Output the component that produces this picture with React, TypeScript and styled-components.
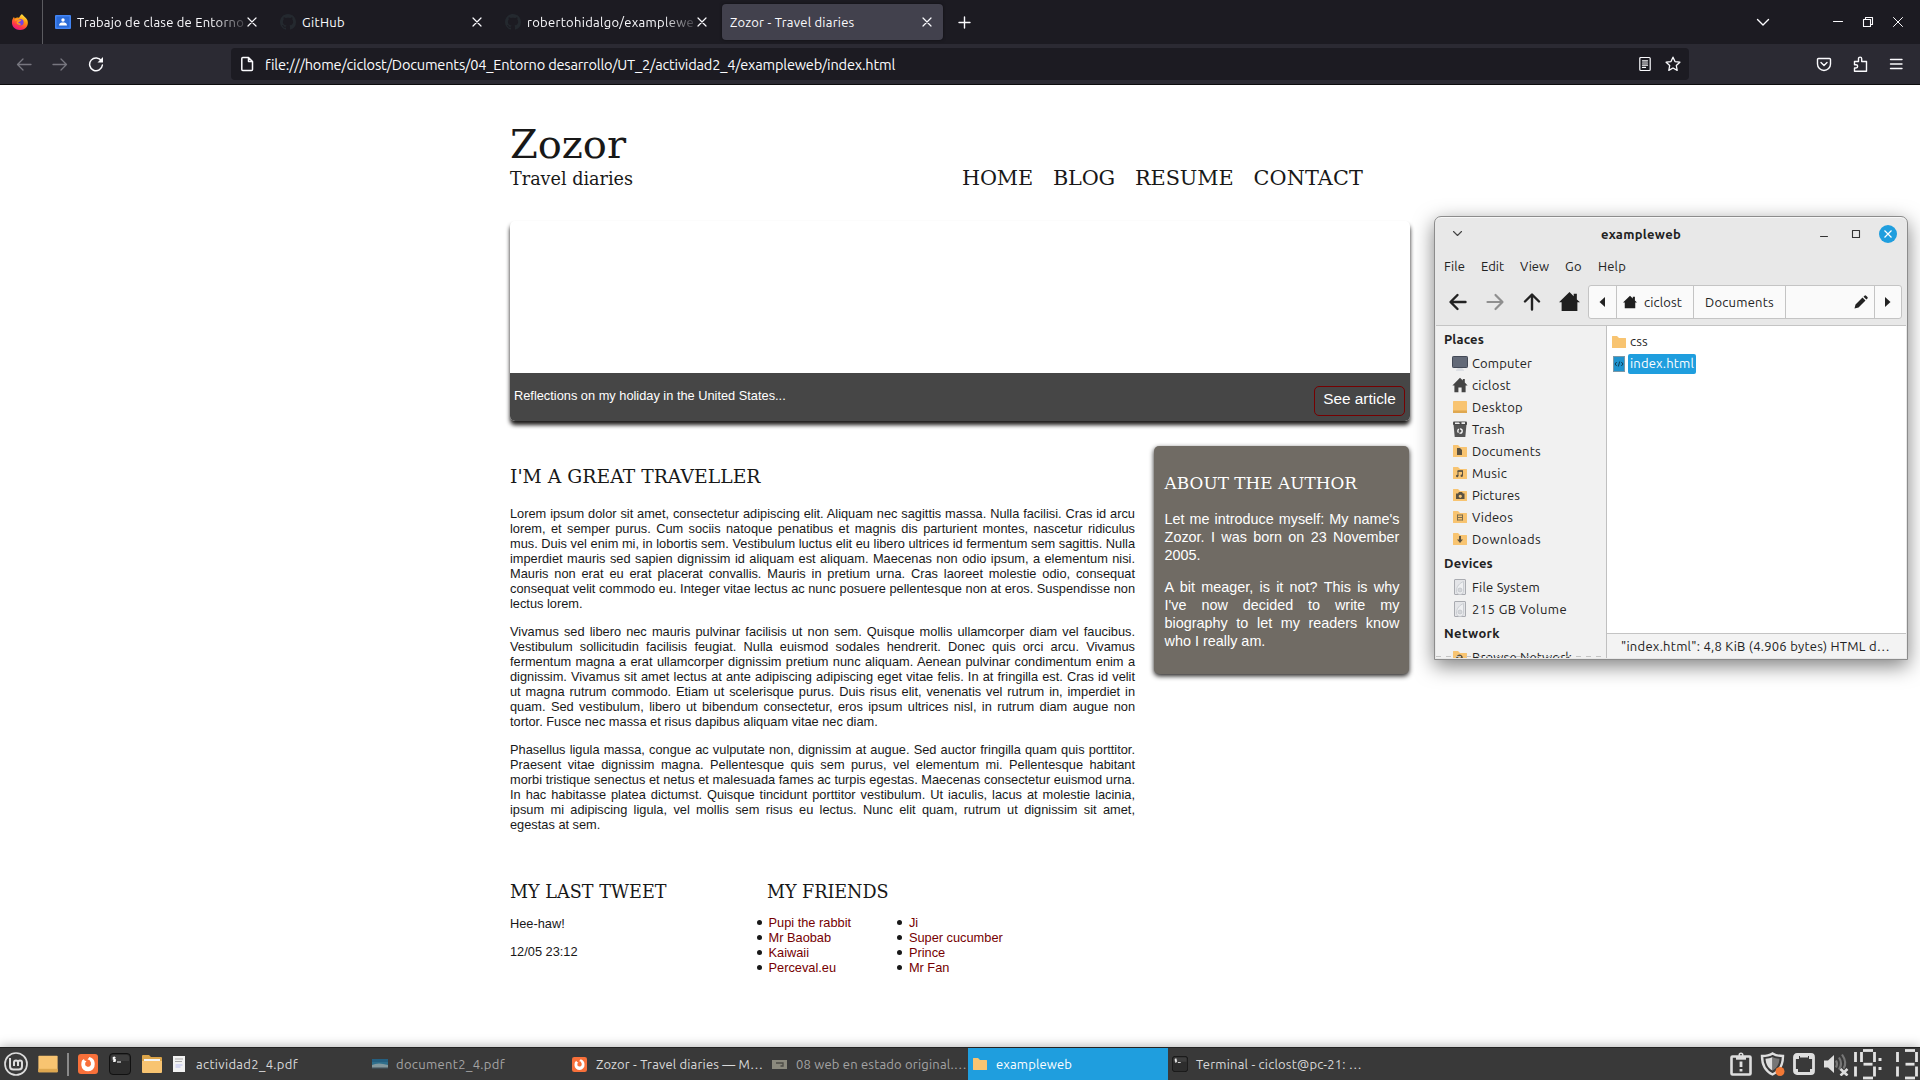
import React, { useLayoutEffect, useRef, useState } from 'react';
import styled, { createGlobalStyle, css } from 'styled-components';

const UI = `"Ubuntu", "Noto Sans", "Open Sans", sans-serif`;
const SANS = `"Liberation Sans", Arial, sans-serif`;
const SERIF = `"DejaVu Serif", serif`;

const GlobalStyle = createGlobalStyle`
  * { box-sizing: border-box; }
  body { margin: 0; background: #fff; overflow: hidden; }
  h1, h2, p, ul { margin: 0; padding: 0; font-weight: normal; }
  ul { list-style: none; }
  svg { display: block; flex: none; }
`;

/* A single-line label whose tracking is computed so that it spans `w` pixels. */
const LabelSpan = styled.span`
  display: inline-block;
  white-space: pre;
  flex: none;
`;

function Label({ w, children }: { w: number; children: string }) {
  const ref = useRef<HTMLSpanElement>(null);
  const [spacing, setSpacing] = useState(0);
  useLayoutEffect(() => {
    if (ref.current) {
      setSpacing((w - ref.current.getBoundingClientRect().width) / children.length);
    }
  }, []);
  return <LabelSpan ref={ref} style={{ letterSpacing: `${spacing}px` }}>{children}</LabelSpan>;
}

const Screen = styled.div`
  position: relative;
  display: grid;
  grid-template-rows: 85px 1fr 33px;
  width: 1920px;
  height: 1080px;
  overflow: hidden;
  background: #fff;
  color: #181818;
`;

/* ---------- Browser chrome ---------- */
const Chrome = styled.header`
  display: flex;
  flex-direction: column;
  background: #2b2a33;
  border-bottom: 1px solid #0c0c0d;
  color: #fbfbfe;
  font-family: ${UI};
`;
const TabStrip = styled.div`
  display: flex;
  align-items: center;
  height: 44px;
  background: #1c1b22;
`;
const PinnedTab = styled.div`
  display: flex;
  align-items: center;
  justify-content: center;
  width: 43px;
  height: 44px;
  padding-right: 3px;
  border-right: 1px solid #5b5b60;
  margin-right: 4px;
`;
const Tab = styled.div<{ $active?: boolean }>`
  display: flex;
  align-items: center;
  width: 221px;
  height: 36px;
  margin-right: 4px;
  padding: 0 10px 0 8px;
  border-radius: 4px;
  font-size: 13px;
  ${(p) => p.$active && css`background: #42414d; box-shadow: 0 0 3px rgba(0, 0, 0, 0.5);`}
`;
const TabIcon = styled.div`
  width: 22px;
`;
const TabTitle = styled.div<{ $fade?: boolean }>`
  flex: 1;
  min-width: 0;
  overflow: hidden;
  line-height: 20px;
  ${(p) => p.$fade && css`mask-image: linear-gradient(to left, rgba(0, 0, 0, 0.15) 0, #000 32px);`}
`;
const TabClose = styled.div`
  width: 12px;
  margin-left: 1px;
`;
const Spacer = styled.div`
  flex: 1;
`;
const WindowButtons = styled.div`
  display: flex;
  align-items: center;
  padding-right: 14px;
  gap: 14px;
`;
const ChevronSlot = styled.div`
  margin-right: 59px;
`;
const NavRow = styled.div`
  display: flex;
  align-items: center;
  height: 40px;
`;
const NavButtons = styled.div`
  display: flex;
  gap: 20px;
  width: 231px;
  padding-left: 16px;
`;
const UrlBar = styled.div`
  display: flex;
  align-items: center;
  width: 1458px;
  height: 32px;
  padding: 0 8px;
  border-radius: 4px;
  background: #1c1b22;
  font-size: 14.6px;
  line-height: 22px;
`;
const UrlText = styled.div`
  flex: 1;
  padding: 2px 0 0 10px;
`;
const UrlActions = styled.div`
  display: flex;
  gap: 12px;
`;
const NavActions = styled.div`
  display: flex;
  flex: 1;
  justify-content: flex-end;
  gap: 20px;
  padding-right: 16px;
`;

/* ---------- Travel diaries page ---------- */
const Page = styled.main`
  width: 900px;
  margin: 0 0 0 510px;
  padding-top: 36px;
  font-family: ${SANS};
`;
const PageHeader = styled.div`
  display: flex;
  align-items: flex-end;
  height: 69px;
`;
const Brand = styled.div`
  width: 452px;
  font-family: ${SERIF};
`;
const SiteTitle = styled.h1`
  font-size: 40px;
  line-height: 47px;
`;
const SiteTagline = styled.h2`
  font-size: 17.6px;
  line-height: 22px;
`;
const Menu = styled.nav`
  display: flex;
  gap: 20px;
  font-family: ${SERIF};
  font-size: 20.8px;
  line-height: 24px;
`;
const Banner = styled.div`
  display: flex;
  flex-direction: column;
  justify-content: flex-end;
  height: 200px;
  margin-top: 31px;
  border-radius: 5px;
  background: #fff;
  box-shadow: 0 4px 4px #1c1a19;
`;
const BannerStrip = styled.div`
  display: flex;
  justify-content: space-between;
  height: 48px;
  padding: 13px 5px 0 4px;
  border-radius: 0 0 5px 5px;
  background: #464646;
  color: #fff;
  font-size: 12.8px;
  line-height: 19px;
`;
const BannerText = styled.div`
  font-size: 12.8px;
`;
const ArticleButton = styled.div`
  display: flex;
  justify-content: center;
  width: 91px;
  height: 30px;
  padding-top: 2px;
  border: 1px solid #760001;
  border-radius: 5px;
  font-size: 15.36px;
`;
const Columns = styled.div`
  display: flex;
  align-items: flex-start;
  justify-content: space-between;
  height: 386px;
  margin-top: 25px;
`;
const Article = styled.article`
  width: 625px;
  padding-top: 19px;
  font-size: 12.8px;
  line-height: 15px;
  text-align: justify;
  p { margin-bottom: 13px; }
`;
const Heading = styled.h1<{ $size: number }>`
  font-family: ${SERIF};
  font-size: ${(p) => p.$size}px;
  line-height: 24px;
`;
const ArticleHeading = styled(Heading)`
  height: 24px;
  margin-bottom: 17px;
`;
const Aside = styled.aside`
  width: 255px;
  height: 228px;
  margin-right: 1px;
  padding: 27px 9.6px 0 10.6px;
  border-radius: 5px;
  background: #706b64;
  box-shadow: 0 2px 5px #1c1a19;
  color: #fff;
  font-size: 14.4px;
  line-height: 18px;
  text-align: justify;
  p { margin-bottom: 14px; }
`;
const AsideHeading = styled.h1`
  margin-bottom: 17px;
  font-family: ${SERIF};
  font-size: 16.85px;
  line-height: 20px;
`;
const Footer = styled.footer`
  display: flex;
  padding-top: 48px;
  font-size: 12.8px;
  line-height: 15px;
`;
const Tweet = styled.section`
  width: 257px;
  p { margin: 12px 0 13px; }
  p + p { margin-top: 13px; }
`;
const Friends = styled.section``;
const FriendLists = styled.div`
  display: flex;
  margin: 11px 0 0 -10px;
`;
const FriendList = styled.ul`
  width: 140.400px;
  color: #760001;
  li { display: flex; align-items: center; gap: 6.500px; }
  li::before {
    content: '';
    width: 5px;
    height: 5px;
    border-radius: 50%;
    background: #181818;
  }
`;

/* ---------- File manager window ---------- */
const Window = styled.section`
  position: absolute;
  left: 1434px;
  top: 216px;
  display: flex;
  flex-direction: column;
  width: 474px;
  height: 444px;
  border: 1px solid #8c8c8c;
  border-radius: 7px 7px 0 0;
  background: #e8e8e8;
  box-shadow: 0 6px 20px rgba(0, 0, 0, 0.5), inset 0 1px 0 #f8f8f8;
  color: #222;
  font-family: ${UI};
  font-size: 13px;
`;
const TitleBar = styled.div`
  display: grid;
  grid-template-columns: 150px auto 1fr;
  align-items: center;
  height: 34px;
  padding: 0 10px 0 16px;
  font-weight: 700;
`;
const TitleButtons = styled.div`
  display: flex;
  align-items: center;
  justify-content: flex-end;
  gap: 14px;
`;
const MenuBar = styled.div`
  display: flex;
  align-items: center;
  gap: 16px;
  height: 30px;
  padding-left: 9px;
`;
const ToolBar = styled.div`
  display: flex;
  align-items: center;
  height: 44px;
  padding: 0 0 3px 13px;
  gap: 17px;
`;
const PathBar = styled.div`
  display: flex;
  width: 314px;
  height: 34px;
  margin-left: -9px;
  border: 1px solid #c4c4c4;
  border-radius: 3px;
  background: #fafafa;
`;
const PathCell = styled.div<{ $w: number; $end?: boolean; $pad?: number }>`
  display: flex;
  align-items: center;
  justify-content: ${(p) => (p.$end ? 'flex-end' : 'center')};
  gap: 7px;
  width: ${(p) => p.$w}px;
  padding-right: ${(p) => p.$pad ?? 0}px;
  border-right: 1px solid #c4c4c4;
  &:last-child { border-right: 0; }
`;
const WindowBody = styled.div`
  display: flex;
  flex: 1;
  min-height: 0;
  margin: 0 1px 1px;
  border-top: 1px solid #c4c4c4;
`;
const SideBar = styled.div`
  position: relative;
  width: 171px;
  overflow: hidden;
  border-right: 1px solid #c0c0c0;
  background: #f1f1f1;
`;
const SideScrollEdge = styled.div`
  position: absolute;
  left: 0;
  right: 5px;
  bottom: 1px;
  height: 1px;
  background: repeating-linear-gradient(to right, #c4c4c4 0 5px, transparent 5px 10px);
`;
const SideHeading = styled.div`
  height: 26px;
  padding-left: 8px;
  font-weight: 700;
  line-height: 26px;
`;
const SideItem = styled.div`
  display: flex;
  align-items: center;
  gap: 4px;
  height: 22px;
  padding-left: 16px;
  line-height: 22px;
`;
const FilePane = styled.div`
  display: flex;
  flex-direction: column;
  flex: 1;
  background: #fff;
`;
const FileList = styled.div`
  flex: 1;
  padding: 5px 0 0 4px;
`;
const FileRow = styled.div`
  display: flex;
  align-items: center;
  height: 22px;
  gap: 1px;
`;
const FileName = styled.div<{ $selected?: boolean }>`
  height: 20px;
  padding: 0 2px;
  border-radius: 2px;
  line-height: 19px;
  ${(p) => p.$selected && css`background: #1f9ede; color: #fff;`}
`;
const StatusBar = styled.div`
  height: 25px;
  padding-left: 14px;
  border-top: 1px solid #c4c4c4;
  background: #f3f3f3;
  line-height: 25px;
`;

/* ---------- Desktop panel ---------- */
const Panel = styled.footer`
  position: relative;
  display: flex;
  align-items: center;
  border-top: 1px solid #222;
  background: #393939;
  box-shadow: 0 0 12px rgba(0, 0, 0, 0.35);
  color: #dadada;
  font-family: ${UI};
  font-size: 13px;
`;
const Launchers = styled.div`
  display: flex;
  align-items: center;
  width: 168px;
  padding-left: 4px;
  gap: 9px;
`;
const AppLaunchers = styled.div`
  display: flex;
  align-items: center;
  gap: 11px;
`;
const LaunchDivider = styled.div`
  width: 2px;
  height: 23px;
  margin-left: -1px;
  background: #8a8a8a;
`;
const Task = styled.div<{ $state?: 'active' | 'minimized' }>`
  display: flex;
  align-items: center;
  width: 200px;
  height: 32px;
  padding-left: 4px;
  line-height: 22px;
  ${(p) => p.$state === 'active' && css`background: #1f9ede; color: #fff;`}
  ${(p) => p.$state === 'minimized' && css`color: #a4a4a4;`}
`;
const TaskIcon = styled.div<{ $inset?: number }>`
  width: 24px;
  padding-left: ${(p) => p.$inset ?? 0}px;
`;
const Tray = styled.div`
  display: flex;
  align-items: center;
  gap: 4px;
  margin-left: auto;
  padding-right: 1px;
`;
const TrayIcons = styled.div`
  display: flex;
  align-items: center;
  gap: 8px;
`;

/* ---------- Icons ---------- */
const Close = ({ s = 12, c = '#fbfbfe', w = 1.2 }: { s?: number; c?: string; w?: number }) => (
  <svg width={s} height={s} viewBox="0 0 12 12" stroke={c} strokeWidth={w} strokeLinecap="round">
    <path d="M2 2l8 8M10 2l-8 8" />
  </svg>
);
const Firefox = () => (
  <svg width="18" height="18" viewBox="0 0 18 18">
    <defs>
      <linearGradient id="fx" x1="0.8" y1="0" x2="0.3" y2="1">
        <stop offset="0" stopColor="#fff44f" />
        <stop offset="0.4" stopColor="#ff980e" />
        <stop offset="0.75" stopColor="#ff3647" />
        <stop offset="1" stopColor="#e31587" />
      </linearGradient>
    </defs>
    <path d="M11 1c1 2 4 3 5.500 6.500C18 12 15 17 9 17S.5 12.500 1 8.500C1.200 6.500 2 5 3 4l.7 1.500C5 4.500 6.500 4.500 7.500 4.700 8.500 5 8.500 3 11 1z" fill="url(#fx)" />
    <circle cx="9.300" cy="9.300" r="3.300" fill="#7542e5" />
    <path d="M4 7c2-1 3.500 0 5 .5-1 1-2.500.7-2.500 2 0 1 1 2 3 1.500" fill="none" stroke="#ff9a1f" strokeWidth="1.600" />
  </svg>
);
const Classroom = () => (
  <svg width="16" height="14" viewBox="0 0 16 14">
    <rect width="16" height="14" rx="1" fill="#4285f4" />
    <rect x="1.500" y="1.500" width="13" height="11" fill="#2a6bd8" />
    <circle cx="8" cy="5" r="1.700" fill="#fff" />
    <path d="M4 10.500c0-2.500 2-3 4-3s4 .5 4 3z" fill="#fff" />
  </svg>
);
const GitHub = () => (
  <svg width="16" height="16" viewBox="0 0 16 16" fill="#24292f">
    <path d="M8 0C3.580 0 0 3.580 0 8c0 3.540 2.290 6.530 5.470 7.590.4.070.55-.17.55-.38 0-.19-.01-.82-.01-1.490-2.010.37-2.530-.49-2.690-.94-.09-.23-.48-.94-.82-1.130-.28-.15-.68-.52-.01-.53.63-.01 1.080.58 1.230.82.72 1.210 1.870.87 2.330.66.07-.52.28-.87.51-1.070-1.780-.2-3.640-.89-3.640-3.950 0-.87.31-1.590.82-2.150-.08-.2-.36-1.020.08-2.120 0 0 .67-.21 2.200.82.64-.18 1.320-.27 2-.27s1.360.09 2 .27c1.530-1.040 2.200-.82 2.200-.82.44 1.100.16 1.920.08 2.120.51.56.82 1.270.82 2.150 0 3.070-1.870 3.750-3.650 3.950.29.25.54.73.54 1.480 0 1.070-.01 1.930-.01 2.200 0 .21.15.46.55.38A8 8 0 0 0 16 8c0-4.420-3.580-8-8-8z" />
  </svg>
);
const Line = ({ d, s = 16, c = '#fbfbfe', w = 1.4, fill = 'none' }: { d: string; s?: number; c?: string; w?: number; fill?: string }) => (
  <svg width={s} height={s} viewBox={`0 0 ${s} ${s}`} fill={fill} stroke={c} strokeWidth={w} strokeLinecap="round" strokeLinejoin="round">
    <path d={d} />
  </svg>
);
const Reload = () => (
  <svg width="16" height="16" viewBox="0 0 16 16" fill="none" stroke="#fbfbfe" strokeWidth="1.500">
    <path d="M13.500 5A6.400 6.400 0 1 0 14.400 9" strokeLinecap="round" />
    <path d="M15 1v5.500H9.500z" fill="#fbfbfe" stroke="none" />
  </svg>
);
const HomeGlyph = ({ s, c = '#1f1f1f', door }: { s: number; c?: string; door?: boolean }) => (
  <svg width={s} height={s} viewBox="0 0 20 20" fill={c}>
    {door
      ? <path d="M10 1L0.500 10.500H3V19H8V13h4v6h5v-8.500h2.500L16 7V2.500h-2.500V4.500z" />
      : <path d="M10 1L0 10.800H2.500V19h15v-8.200H20L17 8V2.500h-3V5z" />}
  </svg>
);

type Badge = 'doc' | 'music' | 'camera' | 'video' | 'down' | 'net';
const badgePaths: Record<Badge, React.ReactNode> = {
  doc: <path d="M5 5h3l2 2v5H5z" />,
  music: (
    <>
      <path d="M6 11V6h4.500v4.500" fill="none" stroke="#5b5241" strokeWidth="1" />
      <path d="M5.500 5.300h5.500v1.500H5.500z" />
      <circle cx="5.200" cy="11" r="1.200" />
      <circle cx="9.700" cy="10.700" r="1.200" />
    </>
  ),
  camera: <path fillRule="evenodd" d="M4 6.500h2L7 5h3l1 1.500h1.500V12H4zM8.300 7.700a1.600 1.600 0 1 0 .01 0z" />,
  video: <path d="M5.500 5.500v6M10.500 5.500v6M5.500 6h5M5.500 8.500h5M5.500 11h5" fill="none" stroke="#7d6c4c" strokeWidth="1" />,
  down: <path d="M7 5h2v3.500h2L8 12 5 8.500h2z" />,
  net: <path fillRule="evenodd" d="M7.500 5.500a3.300 3.300 0 1 0 .01 0zM7.500 7.500a1.300 1.300 0 1 1-.01 0z" />,
};
const Folder = ({ badge }: { badge?: Badge }) => (
  <svg width="16" height="16" viewBox="0 0 16 16">
    <path d="M1 2.500Q1 2 1.500 2H6l2 2h6.500q.5 0 .5.500V13.500q0 .5-.5.500h-13Q1 14 1 13.500z" fill="#f8c471" />
    {badge && <g fill="#5b5241">{badgePaths[badge]}</g>}
  </svg>
);
const Monitor = () => (
  <svg width="16" height="16" viewBox="0 0 16 16">
    <path d="M6 12h4l1 2.500h1V16H4v-1.500h1z" fill="#dcdfe4" />
    <rect x="0.500" y="1.500" width="15" height="11" rx="0.800" fill="#636a78" stroke="#434956" />
  </svg>
);
const DesktopIcon = ({ s = 16 }: { s?: number }) => (
  <svg width={s} height={s} viewBox="0 0 16 16">
    <rect x="1" y="2" width="14" height="12" rx="0.500" fill="#f8c471" />
    <rect x="1" y="11.500" width="14" height="2.500" fill="#dfa850" />
  </svg>
);
const Trash = () => (
  <svg width="16" height="16" viewBox="0 0 16 16">
    <path d="M1.500 3h13l-1.200 13H2.700z" fill="#555" />
    <rect x="1" y="0.500" width="14" height="3.500" rx="1" fill="#4a4a4a" />
    <path d="M3 1.500h4l1 1.500H3zM9.500 1.200H13V3H9.500z" fill="#eee" />
    <circle cx="8" cy="10" r="2.200" fill="none" stroke="#fff" strokeWidth="1.300" strokeDasharray="3.600 1" />
  </svg>
);
const Disk = () => (
  <svg width="16" height="16" viewBox="0 0 16 16">
    <rect x="2.500" y="0.500" width="11" height="15" rx="0.500" fill="#e4e5e8" stroke="#a9abb0" />
    <path d="M11.500 2.500v9.500a3.300 3.300 0 0 1-7 0C4.500 7 8 4 11.500 2.500z" fill="#eeeff1" stroke="#c3c6cc" strokeWidth=".8" />
    <circle cx="8" cy="11" r="2" fill="#d5d7db" stroke="#bbbec4" strokeWidth=".7" />
  </svg>
);
const HtmlFile = () => (
  <svg width="16" height="16" viewBox="0 0 16 16">
    <rect x="2.500" y="0.500" width="11" height="15" fill="#1f93ce" stroke="#7a98a8" />
    <path d="M5.700 6L4 8l1.700 2M10.300 6L12 8l-1.700 2M8.700 5.500l-1.400 5" fill="none" stroke="#123d54" strokeWidth="1" />
  </svg>
);
const MintLogo = () => (
  <svg width="24" height="24" viewBox="0 0 24 24" fill="none" stroke="#dcdcdc">
    <circle cx="12" cy="12" r="11" strokeWidth="1.700" />
    <path d="M6 6v8.200q0 3.300 3.300 3.300h5.400q3.300 0 3.300-3.300V10.500a2 2 0 0 0-4 0V14M14 10.500a2 2 0 0 0-4 0V14" strokeWidth="2" />
  </svg>
);
const FirefoxTile = ({ s }: { s: number }) => (
  <svg width={s} height={s} viewBox="0 0 20 20">
    <rect width="20" height="20" rx="3" fill="#f8703a" />
    <path d="M4 6.500L6 5l.5 1.500 2 .8-1.300 1.500v2.500l2 1.500h2l1.700-1.800V8.500L11.500 6 9.500 5.500 11.500 3c3.300.8 5.500 3.500 5.200 7.300A6.700 6.700 0 0 1 3.300 11c0-1.800.2-3.200.7-4.500z" fill="#fff" />
  </svg>
);
const TerminalTile = ({ s }: { s: number }) => (
  <svg width={s} height={s} viewBox="0 0 22 22">
    <rect x="0.500" y="0.500" width="21" height="21" rx="3.500" fill="#2d2d2d" stroke="#111" />
    <path d="M2 4q0-2 2-2h14q2 0 2 2v4H2z" fill="#3e3e3e" />
    <path d="M6.500 4.500H4.300v1.700h2v1.900H4M5.200 3.500v5.500M8 9h4" fill="none" stroke="#fff" strokeWidth="1.100" />
  </svg>
);
const FilesTile = () => (
  <svg width="20" height="20" viewBox="0 0 20 20">
    <path d="M0 2q0-1 1-1h6l2 2h10q1 0 1 1v6H0z" fill="#dba449" />
    <rect x="2" y="5" width="16" height="4" fill="#f3f3f3" />
    <path d="M0 7h20v11q0 1-1 1H1q-1 0-1-1z" fill="#f8c471" />
  </svg>
);
const DocThumb = () => (
  <svg width="12" height="16" viewBox="0 0 12 16">
    <rect width="12" height="16" fill="#f2f2f2" />
    <path d="M2 3h8M2 5.500h7" stroke="#a9a9a9" />
    <path d="M2.500 9h7M2.500 11h5" stroke="#b9bdf0" />
  </svg>
);
const SlideThumb = () => (
  <svg width="16" height="10" viewBox="0 0 16 10">
    <rect width="16" height="10" fill="#2f6f8c" />
    <path d="M0 0h16v3H0z" fill="#245f80" />
    <path d="M0 6q6-3 16 0v3H0z" fill="#83999f" />
    <path d="M0 8.500h16V10H0z" fill="#3d4950" />
  </svg>
);
const ShotThumb = () => (
  <svg width="15" height="9" viewBox="0 0 15 9">
    <rect width="15" height="9" fill="#8b897d" />
    <path d="M4 3h7v3H8.500" fill="none" stroke="#4c4b45" strokeWidth="1.300" />
  </svg>
);
const Updates = () => (
  <svg width="22" height="24" viewBox="0 0 22 24" fill="none" stroke="#dedede">
    <rect x="1.500" y="4.500" width="19" height="18" rx="1" strokeWidth="2.600" />
    <path d="M6 6h10" strokeWidth="3.400" />
    <circle cx="11" cy="3" r="1.800" strokeWidth="1.500" />
    <path d="M11 9.500v5.500M11 17v2.500" strokeWidth="2.800" />
  </svg>
);
const Shield = () => (
  <svg width="25" height="24" viewBox="0 0 25 24">
    <path d="M12.500 1.500c3 2 6.500 2.500 10.500 2.500 0 9-3 15-10.500 18.500C5 19 2 13 2 4c4 0 7.500-.5 10.500-2.500z" fill="none" stroke="#dedede" strokeWidth="2.400" />
    <path d="M12.500 5v13.500C7.500 15.500 6 12 5.500 6.700 8 6.500 10.500 6 12.500 5z" fill="#dedede" />
    <path d="M12.500 5v13.500c5-3 6.500-6.500 7-11.800-2.500-.2-5-.7-7-1.700z" fill="#777" />
    <circle cx="20" cy="19.500" r="4.500" fill="#f27835" />
  </svg>
);
const Network = () => (
  <svg width="22" height="22" viewBox="0 0 22 22">
    <rect x="1.500" y="1.500" width="19" height="19" rx="2.500" fill="none" stroke="#dedede" strokeWidth="2.800" />
    <path d="M2 2h4v4H2zM16 2h4v4h-4zM2 16h3v4H2zM17 16h3v4h-3zM7 2h8v2.500H7z" fill="#dedede" />
  </svg>
);
const Volume = () => (
  <svg width="26" height="24" viewBox="0 0 26 24">
    <path d="M1 8.500h4L11 3v18l-6-5.500H1z" fill="#dedede" />
    <path d="M13 8.500q2 3.500 0 7M16 5.500q4 6 0 12M19 2.500q5.500 8 1.500 14" fill="none" stroke="#777" strokeWidth="2.200" />
    <path d="M17.500 17l7 6.500M24.500 17l-7 6.500" stroke="#dedede" strokeWidth="2.600" />
  </svg>
);

/* Seven-segment clock: segments a-g in the usual order. */
const segmentLines: Record<string, string> = {
  a: 'M3 1.500H13', b: 'M14.500 3V13', c: 'M14.500 17.500V27.500', d: 'M3 29H13',
  e: 'M1.500 17.500V27.500', f: 'M1.500 3V13', g: 'M3.500 15.200H12.500',
};
const litSegments: Record<string, string> = { '1': 'bc', '3': 'abcdg', '9': 'abcdfg' };
const clockGlyphs: { value: string; x: number }[] = [
  { value: '1', x: -12 }, { value: '9', x: 7 }, { value: '1', x: 30 }, { value: '3', x: 49 },
];
const Clock = () => (
  <svg width="66" height="31" viewBox="0 0 66 31" role="img" aria-label="19:13" stroke="#e2e2e2" strokeWidth="2.800">
    {clockGlyphs.map((g, i) => (
      <g key={i} transform={`translate(${g.x} 0)`}>
        {litSegments[g.value].split('').map((s) => <path key={s} d={segmentLines[s]} />)}
      </g>
    ))}
    <path d="M27 9v3M27 18v3" strokeWidth="3" />
  </svg>
);

/* ---------- Data ---------- */
const paragraphs = [
  'Lorem ipsum dolor sit amet, consectetur adipiscing elit. Aliquam nec sagittis massa. Nulla facilisi. Cras id arcu lorem, et semper purus. Cum sociis natoque penatibus et magnis dis parturient montes, nascetur ridiculus mus. Duis vel enim mi, in lobortis sem. Vestibulum luctus elit eu libero ultrices id fermentum sem sagittis. Nulla imperdiet mauris sed sapien dignissim id aliquam est aliquam. Maecenas non odio ipsum, a elementum nisi. Mauris non erat eu erat placerat convallis. Mauris in pretium urna. Cras laoreet molestie odio, consequat consequat velit commodo eu. Integer vitae lectus ac nunc posuere pellentesque non at eros. Suspendisse non lectus lorem.',
  'Vivamus sed libero nec mauris pulvinar facilisis ut non sem. Quisque mollis ullamcorper diam vel faucibus. Vestibulum sollicitudin facilisis feugiat. Nulla euismod sodales hendrerit. Donec quis orci arcu. Vivamus fermentum magna a erat ullamcorper dignissim pretium nunc aliquam. Aenean pulvinar condimentum enim a dignissim. Vivamus sit amet lectus at ante adipiscing adipiscing eget vitae felis. In at fringilla est. Cras id velit ut magna rutrum commodo. Etiam ut scelerisque purus. Duis risus elit, venenatis vel rutrum in, imperdiet in quam. Sed vestibulum, libero ut bibendum consectetur, eros ipsum ultrices nisl, in rutrum diam augue non tortor. Fusce nec massa et risus dapibus aliquam vitae nec diam.',
  'Phasellus ligula massa, congue ac vulputate non, dignissim at augue. Sed auctor fringilla quam quis porttitor. Praesent vitae dignissim magna. Pellentesque quis sem purus, vel elementum mi. Pellentesque habitant morbi tristique senectus et netus et malesuada fames ac turpis egestas. Maecenas consectetur euismod urna. In hac habitasse platea dictumst. Quisque tincidunt porttitor vestibulum. Ut iaculis, lacus at molestie lacinia, ipsum mi adipiscing ligula, vel mollis sem risus eu lectus. Nunc elit quam, rutrum ut dignissim sit amet, egestas at sem.',
];
const friends = [
  ['Pupi the rabbit', 'Mr Baobab', 'Kaiwaii', 'Perceval.eu'],
  ['Ji', 'Super cucumber', 'Prince', 'Mr Fan'],
];
const sideGroups: { name: string; w: number; items: { name: string; w: number; icon: React.ReactNode }[] }[] = [
  {
    name: 'Places', w: 40, items: [
      { name: 'Computer', w: 60, icon: <Monitor /> },
      { name: 'ciclost', w: 39, icon: <HomeGlyph s={16} c="#444" door /> },
      { name: 'Desktop', w: 51, icon: <DesktopIcon /> },
      { name: 'Trash', w: 33, icon: <Trash /> },
      { name: 'Documents', w: 69, icon: <Folder badge="doc" /> },
      { name: 'Music', w: 35, icon: <Folder badge="music" /> },
      { name: 'Pictures', w: 48, icon: <Folder badge="camera" /> },
      { name: 'Videos', w: 41, icon: <Folder badge="video" /> },
      { name: 'Downloads', w: 69, icon: <Folder badge="down" /> },
    ],
  },
  {
    name: 'Devices', w: 49, items: [
      { name: 'File System', w: 68, icon: <Disk /> },
      { name: '215 GB Volume', w: 95, icon: <Disk /> },
    ],
  },
  { name: 'Network', w: 56, items: [{ name: 'Browse Network', w: 100, icon: <Folder badge="net" /> }] },
];

const BrowserChrome = () => (
  <Chrome>
    <TabStrip>
      <PinnedTab><Firefox /></PinnedTab>
      <Tab>
        <TabIcon><Classroom /></TabIcon>
        <TabTitle $fade><Label w={167}>Trabajo de clase de Entorno</Label></TabTitle>
        <TabClose><Close /></TabClose>
      </Tab>
      <Tab>
        <TabIcon><GitHub /></TabIcon>
        <TabTitle><Label w={43}>GitHub</Label></TabTitle>
        <TabClose><Close /></TabClose>
      </Tab>
      <Tab>
        <TabIcon><GitHub /></TabIcon>
        <TabTitle $fade><Label w={167}>robertohidalgo/examplewe</Label></TabTitle>
        <TabClose><Close /></TabClose>
      </Tab>
      <Tab $active>
        <TabTitle><Label w={124.5}>Zozor - Travel diaries</Label></TabTitle>
        <TabClose><Close /></TabClose>
      </Tab>
      <Line d="M17.500 7v11M12 12.500h11" s={24} w={1.4} />
      <Spacer />
      <ChevronSlot><Line d="M2.500 5.500L8 11l5.500-5.500" /></ChevronSlot>
      <WindowButtons>
        <Line d="M3.500 7.500h9" w={1.1} />
        <Line d="M3.500 5.500h7v7h-7zM5.500 5.500v-2h7v7h-2" w={1.1} />
        <Line d="M3.500 3.500l9 9M12.500 3.500l-9 9" w={1} />
      </WindowButtons>
    </TabStrip>
    <NavRow>
      <NavButtons>
        <Line d="M15 8.500H1.500M7 3L1.500 8.500 7 14" c="#77767f" w={1.3} />
        <Line d="M1 8.500h13.500M9 3l5.500 5.500L9 14" c="#77767f" w={1.3} />
        <Reload />
      </NavButtons>
      <UrlBar>
        <Line d="M2.800 2.500q0-1 1-1h5.700l4 4v8q0 1-1 1H3.800q-1 0-1-1zM9.500 1.500v4h4" w={1.5} />
        <UrlText>
          <Label w={629.5}>file:///home/ciclost/Documents/04_Entorno desarrollo/UT_2/actividad2_4/exampleweb/index.html</Label>
        </UrlText>
        <UrlActions>
          <Line d="M2.800 2.500q0-1 1-1h8.400q1 0 1 1v11q0 1-1 1H3.800q-1 0-1-1zM5.500 4.800h5M5.500 7h5M5.500 9.200h5M5.500 11.400h3" w={1.2} />
          <Line d="M8 1.200l2 4.400 4.900.6-3.600 3.300.9 4.900L8 12l-4.200 2.400.9-4.900L1.100 6.200 6 5.600z" w={1.3} />
        </UrlActions>
      </UrlBar>
      <NavActions>
        <Line d="M1.500 3.500q0-1 1-1h11q1 0 1 1V8a6.500 6.500 0 0 1-13 0zM5 6.500l3 3 3-3" w={1.4} />
        <Line d="M2.500 5.500h4V2.700a1.600 1.600 0 0 1 3.200 0V5.500H14.500V15.300H2.500V12H4a1.600 1.600 0 0 0 0-3.300H2.500z" w={1.4} />
        <Line d="M2.500 3.500h11.500M2.500 8h11.500M2.500 12.500h11.500" w={1.4} />
      </NavActions>
    </NavRow>
  </Chrome>
);

const Blog = () => (
  <Page>
    <PageHeader>
      <Brand>
        <SiteTitle><Label w={116}>Zozor</Label></SiteTitle>
        <SiteTagline><Label w={123}>Travel diaries</Label></SiteTagline>
      </Brand>
      <Menu>
        <Label w={71}>HOME</Label>
        <Label w={62}>BLOG</Label>
        <Label w={98.500}>RESUME</Label>
        <Label w={109.500}>CONTACT</Label>
      </Menu>
    </PageHeader>
    <Banner>
      <BannerStrip>
        <BannerText>Reflections on my holiday in the United States...</BannerText>
        <ArticleButton>See article</ArticleButton>
      </BannerStrip>
    </Banner>
    <Columns>
      <Article>
        <ArticleHeading $size={18.72}><Label w={250.500}>I'M A GREAT TRAVELLER</Label></ArticleHeading>
        {paragraphs.map((text, i) => <p key={i}>{text}</p>)}
      </Article>
      <Aside>
        <AsideHeading><Label w={192.500}>ABOUT THE AUTHOR</Label></AsideHeading>
        <p>Let me introduce myself: My name's Zozor. I was born on 23 November 2005.</p>
        <p>A bit meager, is it not? This is why I've now decided to write my biography to let my readers know who I really am.</p>
      </Aside>
    </Columns>
    <Footer>
      <Tweet>
        <Heading $size={17.6}><Label w={156.500}>MY LAST TWEET</Label></Heading>
        <p>Hee-haw!</p>
        <p>12/05 23:12</p>
      </Tweet>
      <Friends>
        <Heading $size={17.6}><Label w={121.500}>MY FRIENDS</Label></Heading>
        <FriendLists>
          {friends.map((list, i) => (
            <FriendList key={i}>{list.map((name) => <li key={name}>{name}</li>)}</FriendList>
          ))}
        </FriendLists>
      </Friends>
    </Footer>
  </Page>
);

const FileManager = () => (
  <Window>
    <TitleBar>
      <Line d="M2.500 3.500L6.500 7.500l4-4" s={13} c="#444" w={1.1} />
      <Label w={80}>exampleweb</Label>
      <TitleButtons>
        <Line d="M5.500 11.500h7" s={18} c="#333" w={1} />
        <Line d="M5.500 5.500h7v7h-7z" s={18} c="#333" w={1.1} />
        <svg width="18" height="18" viewBox="0 0 18 18" overflow="visible">
          <circle cx="9" cy="9" r="9" fill="#1f9ede" />
          <path d="M5.500 5.500l7 7M12.500 5.500l-7 7" stroke="#fff" strokeWidth="1.200" />
        </svg>
      </TitleButtons>
    </TitleBar>
    <MenuBar>
      <Label w={21}>File</Label>
      <Label w={23}>Edit</Label>
      <Label w={29}>View</Label>
      <Label w={17}>Go</Label>
      <Label w={28}>Help</Label>
    </MenuBar>
    <ToolBar>
      <Line d="M17.500 10H3M9.500 3L2.500 10l7 7" s={20} c="#222" w={2.4} />
      <Line d="M2.500 10H17M10.500 3l7 7-7 7" s={20} c="#8f8f8f" w={2.2} />
      <Line d="M10 17.500V3M3 9.500l7-7 7 7" s={20} c="#222" w={2.4} />
      <HomeGlyph s={21} />
      <PathBar>
        <PathCell $w={28} $pad={2}><svg width="6" height="12" viewBox="0 0 6 12"><path d="M6 1v10L0.500 6z" fill="#222" /></svg></PathCell>
        <PathCell $w={77} $pad={5}><HomeGlyph s={14} /><Label w={38}>ciclost</Label></PathCell>
        <PathCell $w={92}><Label w={69}>Documents</Label></PathCell>
        <PathCell $w={89} $end $pad={6}>
          <svg width="14" height="14" viewBox="0 0 14 14" fill="#222"><path d="M0.500 13.500l1-4L8.500 2.600l3 3L4.500 12.500zM9.500 1.700l1-1q.8-.7 1.600 0l1.300 1.300q.7.800 0 1.600l-1 1z" /></svg>
        </PathCell>
        <PathCell $w={26}><svg width="6" height="12" viewBox="0 0 6 12"><path d="M0 1v10l5.500-5z" fill="#222" /></svg></PathCell>
      </PathBar>
    </ToolBar>
    <WindowBody>
      <SideBar>
        {sideGroups.map((group) => (
          <React.Fragment key={group.name}>
            <SideHeading><Label w={group.w}>{group.name}</Label></SideHeading>
            {group.items.map((item) => (
              <SideItem key={item.name}>{item.icon}<Label w={item.w}>{item.name}</Label></SideItem>
            ))}
          </React.Fragment>
        ))}
        <SideScrollEdge />
      </SideBar>
      <FilePane>
        <FileList>
          <FileRow><Folder /><FileName><Label w={18}>css</Label></FileName></FileRow>
          <FileRow><HtmlFile /><FileName $selected><Label w={64}>index.html</Label></FileName></FileRow>
        </FileList>
        <StatusBar><Label w={269}>"index.html": 4,8 KiB (4.906 bytes) HTML d…</Label></StatusBar>
      </FilePane>
    </WindowBody>
  </Window>
);

const DesktopPanel = () => (
  <Panel>
    <Launchers>
      <MintLogo />
      <DesktopIcon s={22} />
      <LaunchDivider />
      <AppLaunchers>
        <FirefoxTile s={20} />
        <TerminalTile s={22} />
        <FilesTile />
      </AppLaunchers>
    </Launchers>
    <Task><TaskIcon $inset={1}><DocThumb /></TaskIcon><Label w={102}>actividad2_4.pdf</Label></Task>
    <Task $state="minimized"><TaskIcon><SlideThumb /></TaskIcon><Label w={109}>document2_4.pdf</Label></Task>
    <Task><TaskIcon><FirefoxTile s={15} /></TaskIcon><Label w={167}>Zozor - Travel diaries — M…</Label></Task>
    <Task $state="minimized"><TaskIcon><ShotThumb /></TaskIcon><Label w={171}>08 web en estado original.…</Label></Task>
    <Task $state="active"><TaskIcon><Folder /></TaskIcon><Label w={76}>exampleweb</Label></Task>
    <Task><TaskIcon><TerminalTile s={16} /></TaskIcon><Label w={166}>Terminal - ciclost@pc-21: …</Label></Task>
    <Tray>
      <TrayIcons>
        <Updates />
        <Shield />
        <Network />
        <Volume />
      </TrayIcons>
      <Clock />
    </Tray>
  </Panel>
);

export default function App() {
  return (
    <>
      <GlobalStyle />
      <Screen>
        <BrowserChrome />
        <Blog />
        <DesktopPanel />
        <FileManager />
      </Screen>
    </>
  );
}
